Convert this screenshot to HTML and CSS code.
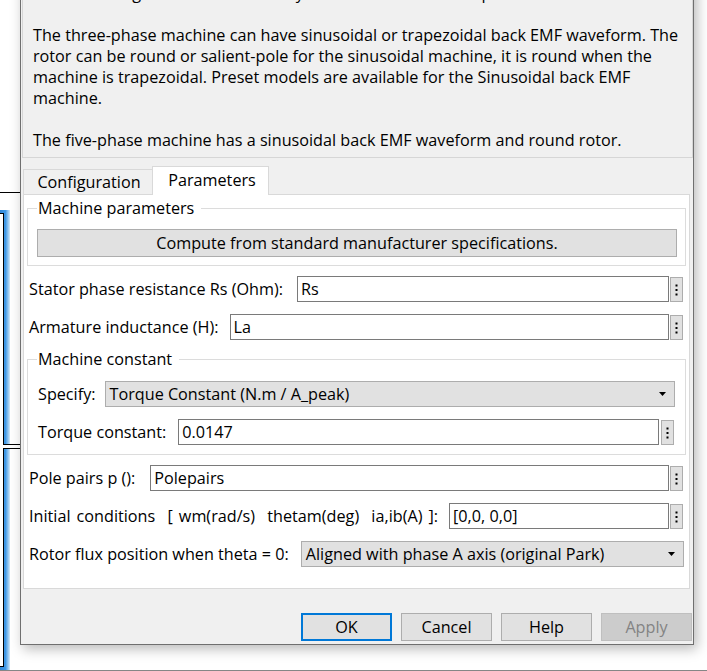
FILE: index.html
```html
<!DOCTYPE html>
<html>
<head>
<meta charset="utf-8">
<link rel="stylesheet" href="styles.css">
</head>
<body>
<div class="desk">
  <div class="bg-hline"></div>
  <div class="bg-sel"></div>
  <div class="bg-box"></div>
  <div class="bg-dline"></div>
  <div class="bg-bottom"></div>

  <div class="dialog">
    <div class="desc">
      <p>stator windings are connected in wye to an internal neutral point.</p>
      <p>The three-phase machine can have sinusoidal or trapezoidal back EMF waveform. The<br>rotor can be round or salient-pole for the sinusoidal machine, it is round when the<br>machine is trapezoidal. Preset models are available for the Sinusoidal back EMF<br>machine.</p>
      <p>The five-phase machine has a sinusoidal back EMF waveform and round rotor.</p>
    </div>

    <div class="tabs">
      <div class="tab tab-config">Configuration</div>
      <div class="tab tab-params">Parameters</div>
    </div>

    <div class="pane">
      <fieldset class="group group-mp">
        <legend>Machine parameters</legend>
        <button class="btn btn-wide">Compute from standard manufacturer specifications.</button>
      </fieldset>

      <div class="row row-first">
        <span class="lbl lbl-rs">Stator phase resistance Rs (Ohm):</span>
        <div class="field">Rs</div>
        <div class="dots"><svg width="13" height="25" viewBox="0 0 13 25"><rect x="5.5" y="7.5" width="2" height="2"/><rect x="5.5" y="12" width="2" height="2"/><rect x="5.5" y="16.5" width="2" height="2"/></svg></div>
      </div>
      <div class="row">
        <span class="lbl">Armature inductance (H):</span>
        <div class="field">La</div>
        <div class="dots"><svg width="13" height="25" viewBox="0 0 13 25"><rect x="5.5" y="7.5" width="2" height="2"/><rect x="5.5" y="12" width="2" height="2"/><rect x="5.5" y="16.5" width="2" height="2"/></svg></div>
      </div>

      <fieldset class="group group-mc">
        <legend>Machine constant</legend>
        <div class="row row-in">
          <span class="lbl lbl-spec">Specify:</span>
          <div class="select">Torque Constant (N.m / A_peak)<svg class="arrow" width="7" height="4" viewBox="0 0 7 4"><path d="M0 0H7L3.5 4Z"/></svg></div>
        </div>
        <div class="row row-in row-torque">
          <span class="lbl lbl-tc">Torque constant:</span>
          <div class="field">0.0147</div>
          <div class="dots dots-gap"><svg width="13" height="25" viewBox="0 0 13 25"><rect x="5.5" y="7.5" width="2" height="2"/><rect x="5.5" y="12" width="2" height="2"/><rect x="5.5" y="16.5" width="2" height="2"/></svg></div>
        </div>
      </fieldset>

      <div class="row row-after">
        <span class="lbl lbl-pole">Pole pairs p ():</span>
        <div class="field">Polepairs</div>
        <div class="dots"><svg width="13" height="25" viewBox="0 0 13 25"><rect x="5.5" y="7.5" width="2" height="2"/><rect x="5.5" y="12" width="2" height="2"/><rect x="5.5" y="16.5" width="2" height="2"/></svg></div>
      </div>
      <div class="row">
        <span class="lbl pre wide-sp">Initial conditions  [ wm(rad/s)  thetam(deg)  ia,ib(A) ]:</span>
        <div class="field">[0,0, 0,0]</div>
        <div class="dots"><svg width="13" height="25" viewBox="0 0 13 25"><rect x="5.5" y="7.5" width="2" height="2"/><rect x="5.5" y="12" width="2" height="2"/><rect x="5.5" y="16.5" width="2" height="2"/></svg></div>
      </div>
      <div class="row">
        <span class="lbl lbl-rot">Rotor flux position when theta = 0:</span>
        <div class="select select-end">Aligned with phase A axis (original Park)<svg class="arrow" width="7" height="4" viewBox="0 0 7 4"><path d="M0 0H7L3.5 4Z"/></svg></div>
      </div>
    </div>

    <div class="actions">
      <button class="btn btn-act btn-ok">OK</button>
      <button class="btn btn-act">Cancel</button>
      <button class="btn btn-act">Help</button>
      <button class="btn btn-act btn-dis">Apply</button>
    </div>
  </div>
</div>
</body>
</html>
```

FILE: styles.css
```css
* { box-sizing: border-box; }
html, body {
  margin: 0;
  padding: 0;
}
body {
  width: 707px;
  height: 671px;
  overflow: hidden;
  background: #ffffff;
  font-family: "Open Sans", "Noto Sans", sans-serif;
  font-size: 16.2px;
  color: #000;
}
.desk {
  position: relative;
  width: 707px;
  height: 671px;
  overflow: hidden;
  background: #ffffff;
}

/* background application window */
.bg-hline {
  position: absolute;
  left: 0; top: 192px;
  width: 20px; height: 1px;
  background: #000;
}
.bg-sel {
  position: absolute;
  left: 0; top: 210px;
  width: 10px; height: 460px;
  background: linear-gradient(to right, #2f86d6 0, #3f98e6 55%, #9fcdf3 85%, #d6ebfb 100%);
}
.bg-box {
  position: absolute;
  left: -4px; top: 213px;
  width: 8px; height: 454px;
  background: #fff;
  border: 1px solid #000;
}
.bg-dline {
  position: absolute;
  left: 3px; top: 444px;
  width: 17px; height: 5px;
  border-top: 1px solid #000;
  border-bottom: 1px solid #000;
  background: #fff;
}
.bg-bottom {
  position: absolute;
  left: 0; top: 670px;
  width: 707px; height: 1px;
  background: #868686;
}

/* dialog */
.dialog {
  position: absolute;
  left: 20px;
  top: -40px;
  width: 674px;
  height: 685px;
  background: #f0f0f0;
  border: 1px solid #6f6f6f;
  box-shadow: 3px 4px 12px rgba(0, 0, 0, 0.28);
  display: flex;
  flex-direction: column;
}

.desc {
  margin: 1px 0 0 1px;
  border: 1px solid #d6d6d6;
  padding: 19.5px 6px 6.5px 10px;
  line-height: 21px;
  white-space: nowrap;
  overflow: hidden;
}
.desc p {
  margin: 0 0 21px 0;
}
.desc p:last-child { margin-bottom: 0; }

/* tabs */
.tabs {
  display: flex;
  align-items: flex-end;
  margin: 8px 0 0 2px;
  height: 28px;
}
.tab {
  text-align: center;
  line-height: 22px;
  border: 1px solid #d9d9d9;
  border-bottom: none;
  background: #f0f0f0;
}
.tab-config {
  width: 130px;
  height: 25px;
  padding-top: 1px;
  padding-left: 2px;
}
.tab-params {
  position: relative;
  z-index: 2;
  width: 117px;
  height: 29px;
  margin-left: -1px;
  margin-bottom: -1px;
  background: #ffffff;
  padding-top: 2px;
  padding-left: 3px;
}

.pane {
  margin: 0 3px 0 2px;
  background: #ffffff;
  border: 1px solid #d9d9d9;
  padding: 3px 3px 18px 3px;
  height: 395px;
}

.group {
  margin: 0;
  border: 1px solid #dcdcdc;
  min-width: 0;
}
.group legend {
  line-height: 20px;
  padding: 0 7px 0 1px;
  margin-left: 0;
}
.group-mp {
  padding: 11px 8px 8px 9px;
}
.group-mc {
  padding: 12px 10px 9px 9px;
  margin-top: 9px;
}
.group-mc legend {
  padding-left: 1px;
}

.row {
  display: flex;
  align-items: center;
  height: 26px;
  padding: 0 3px 0 2px;
  margin-top: 12px;
}
.row-first { margin-top: 10px; }
.row-after { margin-top: 10px; }
.row-in {
  padding: 0 0 0 1px;
  margin-top: 0;
}
.row-in + .row-in { margin-top: 12px; }
.row-torque { padding-right: 1px; }

.lbl {
  white-space: nowrap;
  margin-right: 11px;
}
.lbl-rs { margin-right: 14px; }
.lbl-spec { margin-right: 9px; }
.lbl-tc { margin-right: 12px; }
.lbl-pole { margin-right: 15px; }
.lbl-rot { margin-right: 12px; }
.pre { white-space: pre; }
.wide-sp { word-spacing: 1.9px; }

.field {
  flex: 1;
  height: 26px;
  border: 1px solid #7a7a7a;
  background: #fff;
  padding: 0 4px 0 3px;
  line-height: 24px;
  white-space: nowrap;
}
.dots {
  width: 13px;
  height: 25px;
  margin-left: 1px;
  background: #e1e1e1;
  border: 1px solid #adadad;
  display: flex;
}
.dots svg {
  margin: -1px;
  fill: #000;
}
.dots-gap { margin-left: 2px; }

.select {
  flex: 1;
  height: 26px;
  border: 1px solid #adadad;
  background: #e1e1e1;
  padding: 0 8px 0 4px;
  line-height: 24px;
  display: flex;
  align-items: center;
  justify-content: space-between;
  white-space: nowrap;
}
.select-end { margin-right: -1px; }
.arrow { fill: #000; flex: none; }

.btn {
  font-family: inherit;
  font-size: 16.2px;
  color: #000;
  background: #e1e1e1;
  border: 1px solid #adadad;
  margin: 0;
  padding: 0;
  height: 28px;
}
.btn-wide {
  display: block;
  width: 100%;
}

.actions {
  display: flex;
  justify-content: flex-end;
  gap: 9px;
  margin-top: 24px;
  padding-right: 1px;
}
.btn-act {
  width: 91px;
}
.btn-ok {
  border: 2px solid #0078d7;
}
.btn-dis {
  background: #cccccc;
  border-color: #bfbfbf;
  color: #838383;
}
```
